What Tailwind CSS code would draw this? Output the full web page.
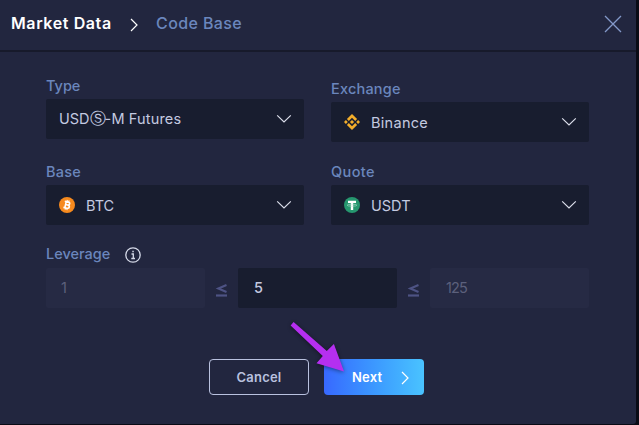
<!DOCTYPE html>
<html lang="en">
<head>
<meta charset="utf-8">
<title>Market Data</title>
<script src="https://cdn.jsdelivr.net/npm/@tailwindcss/browser@4"></script>
</head>
<body class="h-[425px] w-[639px] overflow-hidden bg-[#0a0b15] font-['Inter','DejaVu_Sans',sans-serif] text-[14.5px]">
<svg class="hidden">
  <symbol id="down" viewBox="0 0 16 10"><path d="M1.2 1.4 8 8 14.8 1.4" fill="none" stroke="#dcdfeb" stroke-width="1.2"/></symbol>
</svg>
<main class="relative h-[424px] w-[636px] rounded-br-[3px] bg-[#22263f]">
  <header class="flex h-[52px] items-center border-b-2 border-[#171a2b] pr-[14px] pl-[11px] pb-[3px] text-[16px] leading-[24px]">
    <h1 class="mb-[2px] w-[119px] font-semibold tracking-[0.6px] whitespace-nowrap text-white">Market Data</h1>
    <svg class="mt-[3px] h-[14px] w-[8px]" viewBox="0 0 8 14"><path d="M1 1 7 7 1 13" fill="none" stroke="#fff" stroke-width="1.2"/></svg>
    <span class="mb-[2px] ml-[18px] font-medium tracking-[0.4px] whitespace-nowrap text-[#6b86bd]">Code Base</span>
    <svg class="ml-auto h-[18px] w-[18px]" viewBox="0 0 18 18"><path d="M1 1 17 17M17 1 1 17" fill="none" stroke="#8398c9" stroke-width="1.3"/></svg>
  </header>
  <div class="grid grid-cols-[258px_258px] gap-x-[27px] pl-[46px]">
    <section class="h-[109px] pt-[23px]">
      <label class="block h-[24px] leading-[21px] font-medium tracking-[0px] text-[#6b86bd]">Type</label>
      <div class="flex h-[40px] items-center rounded-[2px] bg-[#181d2f] pr-[12px] pl-[13px] text-[#c4cae0]">
        <span class="flex items-center"><span>USD</span><span class="w-[15px] text-center font-['DejaVu_Sans'] text-[16px] leading-[20px]">Ⓢ</span><span class="tracking-[0.15px]">-M Futures</span></span><svg class="ml-auto h-[10px] w-[16px]"><use href="#down"/></svg>
      </div>
    </section>
    <section class="h-[109px] pt-[26px]">
      <label class="block h-[24px] leading-[21px] font-medium tracking-[0.2px] text-[#6b86bd]">Exchange</label>
      <div class="flex h-[40px] items-center rounded-[2px] bg-[#181d2f] pr-[12px] pl-[13px] text-[#c4cae0]">
        <svg class="h-[16px] w-[16px]" viewBox="0 0 16 16" fill="#f3ae2b"><path d="M8 0 13.1 5 11.2 6.9 8 3.8 4.8 6.9 2.9 5ZM8 16 13.1 11 11.2 9.1 8 12.2 4.8 9.1 2.9 11ZM8 5.9 10.1 8 8 10.1 5.9 8ZM1.9 6.1 3.8 8 1.9 9.9 0 8ZM14.1 6.1 16 8 14.1 9.9 12.2 8Z"/></svg>
        <span class="mt-[2px] ml-[11px] tracking-[0.3px]">Binance</span><svg class="ml-auto h-[10px] w-[16px]"><use href="#down"/></svg>
      </div>
    </section>
    <section class="h-[83px]">
      <label class="block h-[24px] leading-[21px] font-medium tracking-[0.2px] text-[#6b86bd]">Base</label>
      <div class="flex h-[40px] items-center rounded-[2px] bg-[#181d2f] pr-[12px] pl-[13px] text-[#c4cae0]">
        <svg class="h-[16px] w-[16px]" viewBox="0 0 16 16"><circle cx="8" cy="8" r="8" fill="#f68a1e"/><g transform="rotate(13 8 8)" fill="none" stroke="#fff"><path d="M5 4.9H8.6C10.9 4.9 10.9 7.8 8.6 7.8H6.6M8.6 7.8C11.4 7.8 11.4 11.1 8.6 11.1H5M6.5 4.9V11.1" stroke-width="1.6"/><path d="M7.2 3V5M9 3V5M7.2 11V13M9 11V13" stroke-width="1.1"/></g></svg>
        <span class="mt-[2px] ml-[11px] tracking-[0px]">BTC</span><svg class="ml-auto h-[10px] w-[16px]"><use href="#down"/></svg>
      </div>
    </section>
    <section class="h-[83px]">
      <label class="block h-[24px] leading-[21px] font-medium tracking-[0.4px] text-[#6b86bd]">Quote</label>
      <div class="flex h-[40px] items-center rounded-[2px] bg-[#181d2f] pr-[12px] pl-[13px] text-[#c4cae0]">
        <svg class="h-[16px] w-[16px]" viewBox="0 0 16 16"><circle cx="8" cy="8" r="8" fill="#26976f"/><path d="M4 3.8H12V6H9.2V13H6.8V6H4Z" fill="#fff"/><ellipse cx="8" cy="8.2" rx="4.8" ry="1" fill="none" stroke="#b9e0d2" stroke-width=".6"/></svg>
        <span class="mt-[2px] ml-[11px] tracking-[0px]">USDT</span><svg class="ml-auto h-[10px] w-[16px]"><use href="#down"/></svg>
      </div>
    </section>
  </div>
  <div class="flex h-[24px] pl-[46px]">
    <label class="w-[79px] leading-[20px] font-medium tracking-[0px] text-[#6b86bd]">Leverage</label>
    <svg class="mt-[3px] h-[16px] w-[16px]" viewBox="0 0 16 16" fill="none" stroke="#d5d9e8"><circle cx="8" cy="8" r="7.2" stroke-width="1.3"/><path d="M6.5 7H8.3V11.3M6.3 11.5H10M7.3 4.5H8.8" stroke-width="1.3"/></svg>
  </div>
  <div class="flex h-[40px] pl-[46px]">
    <div class="flex w-[159px] items-center rounded-[2px] bg-[#262a44] pl-[15px] text-[#5c607c]">1</div>
    <svg class="h-[40px] w-[33px]" viewBox="0 0 33 40" fill="none" stroke="#4e5384"><path d="M21.5 17 13.3 20.5 21.5 24" stroke-width="2.1"/><path d="M11 27.5H22" stroke-width="2.2"/></svg>
    <div class="flex w-[159px] items-center rounded-[2px] bg-[#181d2f] pl-[16px] font-medium text-[#c4cae0]">5</div>
    <svg class="h-[40px] w-[33px]" viewBox="0 0 33 40" fill="none" stroke="#4e5384"><path d="M21.5 17 13.3 20.5 21.5 24" stroke-width="2.1"/><path d="M11 27.5H22" stroke-width="2.2"/></svg>
    <div class="flex w-[159px] items-center rounded-[2px] bg-[#262a44] pl-[16px] tracking-[-0.9px] text-[#5c607c]">125</div>
  </div>
  <div class="flex gap-[15px] pt-[51px] pl-[209px] text-[13px] font-semibold">
    <button class="h-[36px] w-[100px] rounded-[4px] border border-[#b9c1df] pt-[2px] tracking-[0.2px] text-[#b9c1df]">Cancel</button>
    <button class="flex h-[36px] w-[100px] items-center rounded-[4px] bg-linear-to-r from-[#3868ff] to-[#4ac3ff] pl-[28px] text-white"><span class="mt-[2px] w-[49px] text-left tracking-[0.2px]">Next</span><svg class="mt-[2px] h-[14px] w-[8px]" viewBox="0 0 8 14"><path d="M1 1 7 7 1 13" fill="none" stroke="#fff" stroke-width="1.2"/></svg></button>
  </div>
  <svg class="absolute top-[315px] left-[284px] h-[64px] w-[68px] drop-shadow-[0_1px_2px_rgba(0,0,0,0.45)]" viewBox="0 0 68 64"><path d="M9.6 6.9 42.8 36.1 49.9 29.1 60 56.4 32.5 48.3 38.8 40.9 6.6 10.4Z" fill="#b52ff0"/></svg>
</main>
</body>
</html>
